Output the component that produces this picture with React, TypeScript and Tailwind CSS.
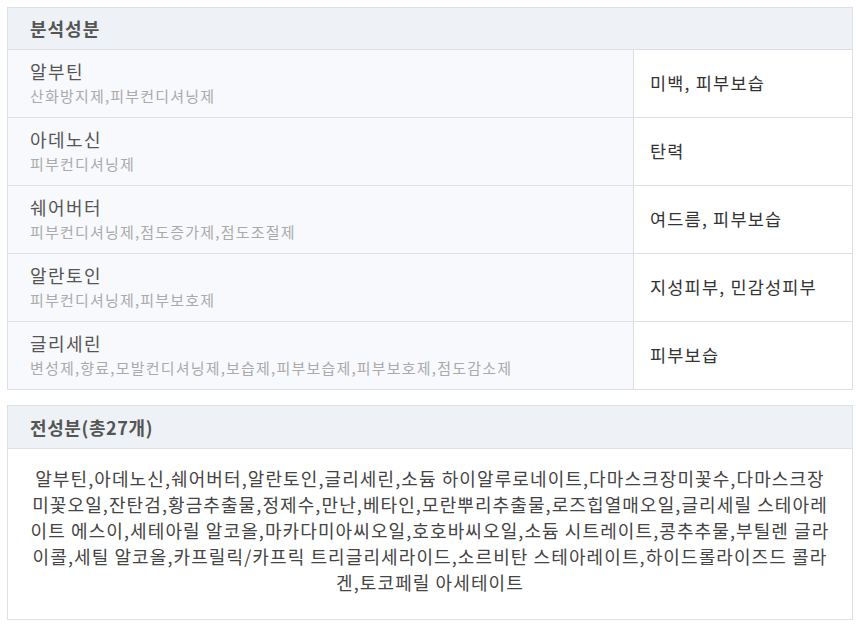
const rows = [
  { name: "알부틴", roles: "산화방지제,피부컨디셔닝제", effect: "미백, 피부보습" },
  { name: "아데노신", roles: "피부컨디셔닝제", effect: "탄력" },
  { name: "쉐어버터", roles: "피부컨디셔닝제,점도증가제,점도조절제", effect: "여드름, 피부보습" },
  { name: "알란토인", roles: "피부컨디셔닝제,피부보호제", effect: "지성피부, 민감성피부" },
  {
    name: "글리세린",
    roles: "변성제,향료,모발컨디셔닝제,보습제,피부보습제,피부보호제,점도감소제",
    effect: "피부보습",
  },
];

const allIngredients =
  "알부틴,아데노신,쉐어버터,알란토인,글리세린,소듐 하이알루로네이트,다마스크장미꽃수,다마스크장미꽃오일,잔탄검,황금추출물,정제수,만난,베타인,모란뿌리추출물,로즈힙열매오일,글리세릴 스테아레이트 에스이,세테아릴 알코올,마카다미아씨오일,호호바씨오일,소듐 시트레이트,콩추추물,부틸렌 글라이콜,세틸 알코올,카프릴릭/카프릭 트리글리세라이드,소르비탄 스테아레이트,하이드롤라이즈드 콜라겐,토코페릴 아세테이트";

export default function App() {
  return (
    <div
      className="min-h-[624px] bg-white px-[7px] pt-[7px] pb-[5px] flex flex-col gap-[15px]"
      style={{ fontFamily: '"Noto Sans CJK KR", "Noto Sans", sans-serif' }}
    >
      <div className="border border-[#dcdfe4]">
        <div className="h-[42px] bg-[#eef1f5] border-b border-[#dcdfe4] flex items-center pl-[22px] text-[18px] font-bold text-[#555] tracking-[1px]">
          분석성분
        </div>
        {rows.map((r, i) => (
          <div
            key={r.name}
            className={
              i > 0 ? "flex h-[68px] border-t border-[#dcdfe4]" : "flex h-[67px]"
            }
          >
            <div className="flex-1 bg-[#f8f9fc] pl-[22px] pt-[8px]">
              <div className="text-[18px] leading-[26px] text-[#555] tracking-[1.4px]">
                {r.name}
              </div>
              <div className="text-[15px] leading-[24px] text-[#aaa] tracking-[1.2px]">
                {r.roles}
              </div>
            </div>
            <div className="w-[219px] border-l border-[#dcdfe4] bg-white flex items-center pl-[16px] text-[17.5px] text-[#333] tracking-[1.2px]">
              {r.effect}
            </div>
          </div>
        ))}
      </div>

      <div className="border border-[#dcdfe4]">
        <div className="h-[43px] bg-[#eef1f5] border-b border-[#dcdfe4] flex items-center pl-[22px] text-[18px] font-bold text-[#555] tracking-[0.6px]">
          전성분(총27개)
        </div>
        <div className="px-[20px] pt-[16px] pb-[24px] text-center text-[18px] leading-[26px] text-[#444] tracking-[1.1px]">
          {allIngredients}
        </div>
      </div>
    </div>
  );
}
